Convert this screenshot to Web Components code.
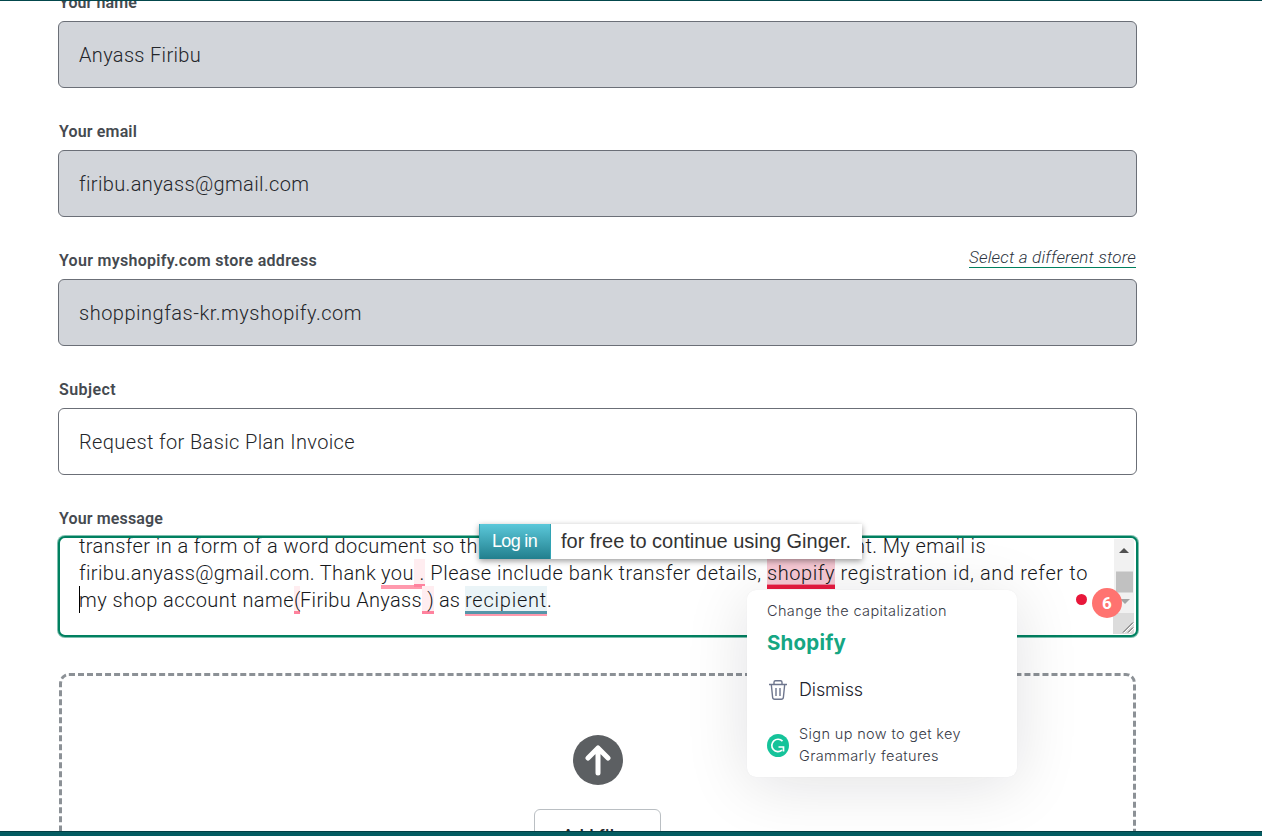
<!DOCTYPE html>
<html lang="en">
<head>
<meta charset="utf-8">
<title>Contact support</title>
<style>
html,body{margin:0;height:836px;overflow:hidden;background:#fff}
body{font-family:Roboto,"Liberation Sans",sans-serif;color:#24262a}
</style>
</head>
<body>
<support-page></support-page>
<script>
const define=(name,html,setup)=>customElements.define(name,class extends HTMLElement{
  connectedCallback(){
    if(this.shadowRoot)return;
    const t=document.createElement('template');t.innerHTML=html;
    this.attachShadow({mode:'open'}).append(t.content.cloneNode(true));
    if(setup)setup.call(this);
  }
});

/* Single line of text whose tracking is adjusted to fill the width in "w". */
define('fit-text',`<style>:host{display:inline-block;white-space:pre;flex:none}span{display:inline-block}</style><span><slot></slot></span>`,function(){
  const w=+this.getAttribute('w'),n=this.textContent.length,s=this.shadowRoot.querySelector('span');
  this.style.width=w+'px';
  s.style.letterSpacing=((w-s.getBoundingClientRect().width)/n)+'px';
});

define('form-field',`<style>
:host{display:block;height:129px}
.label{display:flex;justify-content:space-between;height:30px;line-height:24px;font-size:16px;font-weight:600;color:#454a50;padding:0 0 0 1px;box-sizing:border-box}
.box{box-sizing:border-box;height:67px;border:1px solid #6b6f77;border-radius:6px;background:#fff;padding:0 20px;font-size:20px;font-weight:300;line-height:66px}
:host([readonly]) .box{background:#d2d5da}
</style><div class="label"><slot name="label"></slot><slot name="action"></slot></div><div class="box"><slot></slot></div>`);

define('store-link',`<style>
:host{display:block;height:19px;margin:-1.5px 1px 0 0;border-bottom:1px solid #00805f;font:italic 300 17px/18px Roboto,sans-serif;color:#2b3440}
</style><slot></slot>`);

define('text-mark',`<style>
:host{display:block;height:27px;box-sizing:border-box;position:relative;flex:none;isolation:isolate}
i{position:absolute;left:0;right:0;z-index:-1}
.bg{top:0;height:25px}.l1{top:25px;height:3px}.l2{display:none}
:host([kind=soft]) .bg{background:#ffedf0}:host([kind=soft]) .l1{background:#ff829e}
:host([kind=under]) .l1{background:#ff99ad;top:26px;height:4px}
:host([kind=period]) .bg{background:#ffedf0}:host([kind=period]) .l1{background:#ff829e}
:host([kind=period]) .l2{display:block;top:28px;height:2px;background:#ff99ad}
:host([kind=hot]) .bg{background:#f7c9d4}:host([kind=hot]) .l1{background:#f18298;height:1px}
:host([kind=hot]) .l2{display:block;top:26px;height:4px;background:#e8193e}
:host([kind=blue]) .bg{background:#eaf4f7}:host([kind=blue]) .l1{background:#5795a9}
:host([kind=blue]) .l2{display:block;top:28px;height:2px;background:#ff99ad}
</style><i class="bg"></i><i class="l1"></i><i class="l2"></i><slot></slot>`);

define('scroll-bar',`<style>
:host{display:flex;flex-direction:column;width:21px;height:95px;flex:none}
svg{display:block}
</style><svg width="21" height="95"><path fill="#f1f1f1" d="M1 0h20v74H1z"/><path fill="#505050" d="M6 14l5-5 5 5z"/><path fill="#c1c1c1" d="M3 32.500h17v21H3z"/><path fill="#a3a3a3" d="M7 60h10l-5 5z"/><path fill="#dcdcdc" d="M0 74h21v21H0z"/><path stroke="#fff" d="M11 94l10-10M16 94l5-5"/><path stroke="#555" d="M10 93.500l10-10M15 93.500l5-5"/></svg>`);

define('message-box',`<style>
:host{display:block;height:166px}
.label{height:18px;line-height:24px;font-size:16px;font-weight:600;color:#454a50;padding-left:1px;margin-bottom:11px}
.area{position:relative;box-sizing:border-box;height:101px;width:1080px;border:2px solid #008060;border-radius:7px;box-shadow:0 0 0 1px #00806080;display:flex;background:#fff}
.clip{width:1053px;height:97px;overflow:hidden;padding-left:19px;box-sizing:border-box}
.line{display:flex;height:27px;line-height:28px;font-size:20px;font-weight:300;color:#16181b}
.lines{margin-top:-6px}
.caret{position:absolute;left:19px;top:48px;width:1px;height:27px;background:#000}
scroll-bar{margin-top:1px}
.dot{position:absolute;left:1015.500px;top:56px;width:11px;height:11px;border-radius:50%;background:#e8173a}
.count{position:absolute;left:1032px;top:50px;width:30px;height:30px;border-radius:50%;background:#ff7370;color:#fff;text-align:center;font:700 17px/31px Roboto,sans-serif}
</style><div class="label"><fit-text w="104">Your message</fit-text></div>
<div class="area"><div class="clip"><div class="lines">
<div class="line"><fit-text w="399">transfer in a form of a word document so th</fit-text><fit-text w="132" style="margin-left:376px">nt. My email is</fit-text></div>
<div class="line"><fit-text w="302">firibu.anyass@gmail.com. Thank </fit-text><text-mark kind="under"><fit-text w="33">you</fit-text></text-mark><text-mark kind="period"><fit-text w="11"> .</fit-text></text-mark><fit-text w="342"> Please include bank transfer details, </fit-text><text-mark kind="hot"><fit-text w="68">shopify</fit-text></text-mark><fit-text w="253"> registration id, and refer to</fit-text></div>
<div class="line"><fit-text w="215">my shop account name</fit-text><text-mark kind="soft"><fit-text w="6">(</fit-text></text-mark><fit-text w="122">Firibu Anyass</fit-text><text-mark kind="soft"><fit-text w="12"> )</fit-text></text-mark><fit-text w="31"> as </fit-text><text-mark kind="blue"><fit-text w="82">recipient</fit-text></text-mark><fit-text w="5">.</fit-text></div>
</div></div><scroll-bar></scroll-bar><div class="caret"></div><div class="dot"></div><div class="count">6</div></div>`);

define('drop-zone',`<style>
:host{display:flex;flex-direction:column;align-items:center;box-sizing:border-box;width:1077px;height:260px;margin-left:1px;border:3px dashed #8c9196;border-radius:10px;padding-top:59px}
svg{display:block;flex:none}
.btn{box-sizing:border-box;width:127px;height:50px;margin-top:24px;border:1px solid #babfc3;border-radius:6px;text-align:center;font-size:17px;font-weight:500;line-height:51px;flex:none}
</style><svg width="50" height="50" viewBox="0 0 50 50"><circle cx="25" cy="25" r="25" fill="#5c5f62"/><path d="M25 38V13M15 23l10-10 10 10" fill="none" stroke="#fff" stroke-width="5" stroke-linecap="round" stroke-linejoin="round"/></svg><div class="btn"><fit-text w="70">Add files</fit-text></div>`);

define('ginger-tip',`<style>
:host{position:absolute;left:479px;top:524px;width:383px;height:35px;display:flex;background:#fff;box-shadow:0 2px 6px #0006;font-family:"Liberation Sans",sans-serif}
b{box-sizing:border-box;width:72px;border:solid #32a3b4;border-width:0 1px;background:linear-gradient(#5bc8da,#227f8d);color:#fff;font-weight:400;font-size:18px;line-height:35px;padding-left:12px}
.t{padding-left:10px;font-size:20px;line-height:34px;color:#333}
</style><b><fit-text w="45">Log in</fit-text></b><span class="t"><fit-text w="290">for free to continue using Ginger.</fit-text></span>`);

define('grammar-card',`<style>
:host{position:absolute;left:747px;top:590px;width:270px;height:187px;box-sizing:border-box;border-radius:9px;background:#fff;box-shadow:0 8px 64px #0e101a1f,0 0 1px #20222b14;padding:10px 20px;font-family:Inter,sans-serif;color:#383b47}
.k{font-size:14.5px;line-height:22px;font-weight:300}
.s{font-size:20.500px;font-weight:700;line-height:30px;margin-top:6px;color:#15a683}
.r{display:flex;align-items:center;gap:10px;color:#22242e;font-weight:300}
.d{font-size:18px;line-height:24px;margin-top:20px}
.u{font-size:14.5px;line-height:22px;margin-top:21px;color:#383b47}
svg{flex:none;display:block}.u div fit-text{display:block}
</style><div class="k"><fit-text w="180">Change the capitalization</fit-text></div>
<div class="s"><fit-text w="79">Shopify</fit-text></div>
<div class="r d"><svg width="22" height="22" viewBox="0 0 22 22" fill="none" stroke="#6d758d" stroke-width="1.400"><path d="M2 5.500h18M7 5.500V3.200q0-1.500 1.500-1.500h5q1.500 0 1.500 1.500v2.300M4.300 5.500l1.300 12.800q.2 2 2.100 2h6.600q1.900 0 2.100-2L17.700 5.500M9 9v8M13 9v8"/></svg><fit-text w="64">Dismiss</fit-text></div>
<div class="r u"><svg width="22" height="23" viewBox="0 0 22 23"><ellipse cx="11" cy="11.500" rx="11" ry="11.500" fill="#15c39a"/><path d="M15.500 7.200A6.200 6.200 0 1 0 15 16.200M11.500 13h5v4.500" fill="none" stroke="#fff" stroke-width="1.700"/></svg><div><fit-text w="162">Sign up now to get key</fit-text><fit-text w="140">Grammarly features</fit-text></div></div>`);

define('support-page',`<style>
:host{display:flex;flex-direction:column;position:relative;width:1262px;height:836px;overflow:hidden}
.top{height:1px;background:#03474c;flex:none}
main{height:830px;overflow:hidden;padding:0 125px 0 58px}
.form{margin-top:-10px}
.foot{height:5px;box-sizing:border-box;border-top:1px solid #033f44;background:#045c61;flex:none}
</style><div class="top"></div><main><div class="form">
<form-field readonly><fit-text slot="label" w="78">Your name</fit-text><fit-text w="122">Anyass Firibu</fit-text></form-field>
<form-field readonly><fit-text slot="label" w="78">Your email</fit-text><fit-text w="230">firibu.anyass@gmail.com</fit-text></form-field>
<form-field readonly><fit-text slot="label" w="258">Your myshopify.com store address</fit-text><store-link slot="action"><fit-text w="167">Select a different store</fit-text></store-link><fit-text w="283">shoppingfas-kr.myshopify.com</fit-text></form-field>
<form-field><fit-text slot="label" w="57">Subject</fit-text><fit-text w="276">Request for Basic Plan Invoice</fit-text></form-field>
<message-box></message-box></div>
<drop-zone></drop-zone></main><div class="foot"></div>
<grammar-card></grammar-card><ginger-tip></ginger-tip>`);
</script>
</body>
</html>
